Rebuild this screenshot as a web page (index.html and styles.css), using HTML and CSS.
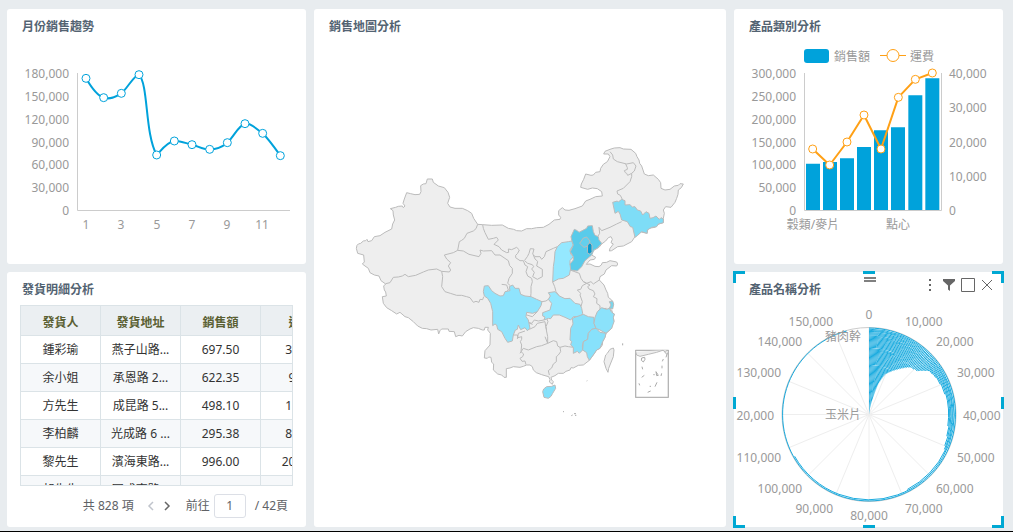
FILE: index.html
```html
<!DOCTYPE html>
<html lang="zh-Hant">
<head>
<meta charset="utf-8">
<meta name="viewport" content="width=device-width, initial-scale=1">
<title>銷售分析</title>
<link rel="stylesheet" href="styles.css">
</head>
<body>
<main class="dashboard">
  <section class="card">
    <header class="card-header"><h2>月份銷售趨勢</h2></header>
    <svg class="chart" viewBox="7 42 299 222" role="img" aria-label="月份銷售趨勢">
      <g class="tick end">
        <text x="69" y="78">180,000</text><text x="69" y="101">150,000</text><text x="69" y="124">120,000</text>
        <text x="69" y="147">90,000</text><text x="69" y="169">60,000</text><text x="69" y="192">30,000</text><text x="69" y="215">0</text>
      </g>
      <g class="tick middle">
        <text x="86" y="229">1</text><text x="121" y="229">3</text><text x="157" y="229">5</text><text x="192" y="229">7</text><text x="227" y="229">9</text><text x="262" y="229">11</text>
      </g>
      <path class="axis" d="M77.5 73V210.500H290"/>
      <g transform="scale(.33333)">
        <path class="trend" d="M258 235C276 266 293 288 311 293C329 300 346 291 364 280C382 266 404 222 417 224C446 255 434 400 470 465C480 455 500 426 523 423C540 422 558 430 576 434C594 438 611 450 629 448C647 448 664 443 682 428C702 410 715 376 735 371C753 368 770 388 788 400C806 418 823 442 841 467"/>
        <g class="dots blue">
          <circle cx="258" cy="235" r="12"/><circle cx="311" cy="293" r="12"/><circle cx="364" cy="280" r="12"/><circle cx="417" cy="224" r="12"/><circle cx="470" cy="465" r="12"/><circle cx="523" cy="423" r="12"/><circle cx="576" cy="434" r="12"/><circle cx="629" cy="448" r="12"/><circle cx="682" cy="428" r="12"/><circle cx="735" cy="371" r="12"/><circle cx="788" cy="400" r="12"/><circle cx="841" cy="467" r="12"/>
        </g>
      </g>
    </svg>
  </section>

  <section class="card map-card">
    <header class="card-header"><h2>銷售地圖分析</h2></header>
    <svg class="chart" viewBox="314 42 412 485" role="img" aria-label="銷售地圖分析">
      <g class="map" transform="translate(345 140) scale(.33333)">
        <path d="M34 325L36 316 40 312 47 310 55 303 62 302 66 298 69 305 80 302 88 290 105 287 120 277 140 267 143 252 149 240 145 225 144 212 136 206 152 202 160 199 172 198 175 203 180 198 174 190 178 177 185 158 197 161 210 164 224 163 228 155 227 137 235 132 243 131 247 117 262 117 265 127 280 138 298 143 309 157 314 172 308 190 315 201 330 205 352 205 368 212 380 220 386 235 398 253 413 254 440 256 472 255 490 265 506 268 515 272 530 273 545 266 560 266 575 263 595 262 612 253 628 240 645 238 647 232 641 225 641 212 652 203 660 210 672 211 690 206 712 198 722 183 735 178 752 170 772 168 770 155 757 146 742 144 728 148 707 142 709 132 716 118 722 102 738 106 745 105 752 97 765 95 767 85 775 73 787 65 795 50 790 42 776 42 780 34 795 28 808 24 825 23 835 27 858 28 872 40 876 50 882 60 884 70 890 78 898 102 910 107 925 105 940 118 947 128 948 145 960 150 975 148 988 138 1000 136 1005 131 1015 132 1009 143 1000 150 999 163 995 175 990 187 978 202 962 200 955 210 958 220 955 235 955 248 942 252 930 262 910 265 905 280 885 275 875 282 870 290 860 305 835 318 818 320 800 332 793 333 795 325 805 312 798 308 802 298 798 290 790 293 782 303 770 312 762 322 750 328 742 335 740 345 752 352 748 358 735 360 724 373 735 372 750 379 762 380 769 375 772 368 785 367 795 362 815 366 818 372 815 378 800 377 783 390 778 402 765 410 763 420 777 435 783 450 788 460 790 472 800 480 805 493 793 505 800 510 803 519 808 522 805 532 807 545 800 550 800 565 783 580 780 592 773 605 772 615 765 625 755 630 747 642 733 661 715 675 700 676 685 684 678 683 675 690 663 694 655 700 640 700 630 707 618 712 620 720 625 725 622 733 613 726 615 719 611 710 600 707 590 704 574 698 565 690 562 680 555 675 545 675 535 679 525 682 505 680 495 684 484 686 484 712 477 712 470 705 458 702 445 690 446 672 440 667 438 652 431 651 427 655 418 654 420 632 435 615 436 580 428 570 430 562 420 562 418 570 412 570 400 565 385 563 375 567 362 575 352 588 342 586 332 590 328 575 312 574 310 567 290 567 285 572 281 582 278 568 258 570 245 566 232 565 218 558 205 545 190 533 180 530 165 517 155 522 140 512 125 503 115 490 112 470 124 468 122 456 118 450 116 438 122 432 108 422 102 408 88 405 75 398 70 385 60 378 52 372 58 366 56 345 38 340Z"/>
        <g class="borders">
          <path d="M122 431L135 428 145 412 160 411 172 408 180 403 190 410 212 406 235 396 250 390 275 387 290 394 313 396 317 390 310 378 317 368 305 357 298 345 325 338 338 331 343 305 350 301 358 295 366 280 385 273 393 266 398 253"/>
          <path d="M338 331L355 333 372 343 402 350 408 340 405 330 415 333 440 332 450 345 465 345 490 362 494 377 502 385 502 400 492 415 488 430 496 437M470 433L485 435 490 450 482 457 476 463"/>
          <path d="M413 254L415 265 420 278 430 298 445 295 455 292 460 300 447 313 462 320 470 330 485 338 491 337 490 327 500 329 515 322 523 330 518 340 512 346 512 353 525 362 535 362 540 375 548 380 543 395 548 408 560 415 562 425 558 440 558 460 557 470"/>
          <path d="M538 362L547 350 552 340 556 326 567 327 563 342 570 350 585 350 590 358 598 350 603 335 625 325 637 320"/>
          <path d="M540 363L548 370 562 374 566 380 560 387 568 397 563 410 577 418 592 410 592 388 575 378 578 364 570 357 565 345"/>
          <path d="M290 394L293 410 290 440 300 455 316 460 335 466 350 466 365 470 375 473 385 487 393 484 402 487 405 478 413 479 416 470"/>
          <path d="M795 35L803 45 805 57 817 65 845 72 865 68 873 78 868 93 860 100 860 110 855 125 835 145 816 153 818 162 826 166 832 178M842 72L847 83 847 88 838 92 841 98 845 100 848 106 860 100"/>
          <path d="M830 245L815 252 795 262 770 272 762 262 764 280 758 290"/>
          <path d="M623 426L629 440 633 455 643 468M675 390L703 400 708 415 715 425 725 430 712 437 707 448 697 450 707 460 705 465 712 485 708 500"/>
          <path d="M715 425L725 430 738 425 745 432 763 420M725 430L735 435 728 440 732 447 745 452 750 462 745 470 756 476 755 490 765 497 765 507 785 505M755 532L765 507"/>
          <path d="M605 535L609 545 603 560 604 570 608 590 608 610 625 602 635 605 638 618 645 622 660 618 670 620 685 622M645 622L647 635 640 645 634 650 634 665 625 672 620 684 610 692 613 705M600 590L608 610"/>
          <path d="M525 640L535 625 550 630 575 620 590 617 608 610M553 568L570 560 577 550 600 545 602 560 605 570"/>
          <path d="M505 585L517 585 519 593 530 590 530 598 526 605 530 615 528 635 536 642 533 650 525 655 531 664 540 663 543 674M517 597L520 580 540 573"/>
          <path d="M591 485L603 483 610 478M577 515L562 530 545 525M545 545L560 550 568 540 580 543 597 540M548 548L563 553"/>
        </g>
        <path fill="#7eddf7" d="M803 187L817 183 820 186 830 178 840 182 840 195 855 194 862 201 870 200 877 210 887 213 893 225 903 215 912 220 915 235 924 233 933 228 943 238 948 233 955 237 955 248 940 252 935 260 920 262 907 270 907 280 890 275 877 287 870 292 863 262 856 260 847 245 830 240 825 222 820 214 810 220Z"/>
        <path fill="#95e8ff" d="M637 320L650 308 670 305 680 303 685 315 675 330 677 342 685 350 675 362 675 372 678 380 673 405 655 415 640 417 623 426 625 380 628 360 630 335Z"/>
        <path fill="#59cbea" d="M680 300L678 290 688 268 697 272 702 277 725 265 728 258 742 257 745 275 750 286 760 290 762 300 770 310 757 325 747 330 740 345 720 362 710 380 697 393 677 390 675 372 685 360 685 350 676 335 685 315Z"/>
        <path fill="#64cfec" d="M704 310L715 294 725 291 735 303 730 318 717 322Z"/>
        <path fill="#0598cd" d="M728 315L735 308 741 315 741 335 735 343 727 338Z"/>
        <path fill="#8fe4fd" d="M418 438L430 437 440 452 450 460 465 468 475 467 480 455 495 452 493 440 503 435 510 445 522 445 527 463 540 468 558 470 575 478 591 485 588 497 577 515 563 520 545 517 543 530 550 540 555 565 547 572 540 563 527 569 520 555 517 568 511 570 505 585 502 603 488 607 480 595 470 575 458 568 455 555 450 552 443 557 443 515 437 490 428 475 418 468 415 455Z"/>
        <path fill="#95e8ff" d="M610 458L630 455 643 468 660 476 675 475 690 490 705 493 710 505 713 520 707 530 685 530 677 540 660 532 643 525 625 525 617 536 610 535 597 540 600 531 593 528 593 518 615 510 620 490 610 478 616 468Z"/>
        <path fill="#87e1fb" d="M682 535L695 530 715 523 730 530 747 532 747 550 753 565 740 568 730 580 728 598 715 605 712 618 713 630 703 640 697 634 685 640 685 622 677 615 680 604 675 600 677 565 684 552Z"/>
        <path fill="#8be2fb" d="M750 532L757 515 770 503 785 508 793 505 800 517 808 522 805 532 807 545 800 565 783 580 765 570 753 565 747 550Z"/>
        <path fill="#87e1fb" d="M740 568L753 565 765 577 783 580 780 592 773 605 765 625 755 630 747 642 733 661 727 650 725 638 713 630 715 605 728 598 730 580Z"/>
        <path fill="#76d6ee" d="M793 485L803 483 806 493 803 507 793 505 798 495Z"/>
        <path fill="#84e1fb" d="M593 755L596 747 605 740 620 739 630 735 632 745 623 760 618 769 610 775 597 772Z"/>
        <path d="M805 624L795 628 787 640 782 645 777 665 783 685 789 697 791 685 795 675 805 650 807 630Z"/>
        <path class="marks" d="M833 610V616M725 723L727 722M654 815H657M679 827L683 825M687 821H693M690 826H694"/>
        <rect class="inset" x="872" y="631" width="98" height="141"/>
        <path class="inset-land" d="M872 635L875 645 885 649 910 643 935 637 953 631M955 631L965 643 969 637M955 631L961 637 965 631"/>
        <path class="marks" d="M890 654L899 652 900 658 895 666 889 661ZM967 640L963 652M955 657L952 664M891 680L893 688M951 677V685M890 712L898 706M925 704H929M933 695L938 703 940 706 935 707ZM950 700L948 708M882 730L884 736M936 727L930 740M914 739H918M908 757L917 753"/>
      </g>
    </svg>
  </section>

  <section class="card">
    <header class="card-header"><h2>產品類別分析</h2></header>
    <svg class="chart" viewBox="734 42 269 222" role="img" aria-label="產品類別分析">
      <rect class="bar" x="804" y="49" width="25" height="14" rx="3"/>
      <path class="legend-line" d="M880 55.500H906"/><circle class="legend-dot" cx="893" cy="55.500" r="6"/>
      <g class="tick"><text x="834" y="61">銷售額</text><text x="910" y="61">運費</text>
        <text x="949" y="78">40,000</text><text x="949" y="112">30,000</text><text x="949" y="147">20,000</text><text x="949" y="181">10,000</text><text x="949" y="215">0</text></g>
      <g class="tick end">
        <text x="796" y="78">300,000</text><text x="796" y="101">250,000</text><text x="796" y="124">200,000</text><text x="796" y="147">150,000</text><text x="796" y="169">100,000</text><text x="796" y="192">50,000</text><text x="796" y="215">0</text>
      </g>
      <g class="tick middle"><text x="813" y="229">穀類/麥片</text><text x="898" y="229">點心</text></g>
      <path class="axis" d="M804.500 73V210.500H941.500V73"/>
      <g transform="translate(727 0) scale(.33333)">
        <path class="bar" d="M237 630V491H279V630ZM288 630V486H330V630ZM339 630V475H381V630ZM390 630V441H432V630ZM441 630V391H483V630ZM492 630V382H534V630ZM544 630V286H586V630ZM595 630V235H637V630Z"/>
        <path class="freight" d="M257 447L308 495 360 426 411 345 462 447 514 292 565 238 616 219"/>
        <g class="dots orange">
          <circle cx="257" cy="447" r="12"/><circle cx="308" cy="495" r="12"/><circle cx="360" cy="426" r="12"/><circle cx="411" cy="345" r="12"/><circle cx="462" cy="447" r="12"/><circle cx="514" cy="292" r="12"/><circle cx="565" cy="238" r="12"/><circle cx="616" cy="219" r="12"/>
        </g>
      </g>
    </svg>
  </section>

  <section class="card">
    <header class="card-header"><h2>發貨明細分析</h2></header>
    <div class="table-wrap">
      <table>
        <thead><tr><th>發貨人</th><th>發貨地址</th><th>銷售額</th><th>運費</th></tr></thead>
        <tbody>
          <tr><td>鍾彩瑜</td><td>燕子山路...</td><td>697.50</td><td>32.38</td></tr>
          <tr><td>余小姐</td><td>承恩路 2...</td><td>622.35</td><td>9.75</td></tr>
          <tr><td>方先生</td><td>成昆路 5...</td><td>498.10</td><td>11.61</td></tr>
          <tr><td>李柏麟</td><td>光成路 6 ...</td><td>295.38</td><td>81.91</td></tr>
          <tr><td>黎先生</td><td>濱海東路...</td><td>996.00</td><td>208.58</td></tr>
          <tr><td>胡先生</td><td>冠成南路...</td><td>325.00</td><td>65.83</td></tr>
        </tbody>
      </table>
    </div>
    <nav class="pager" aria-label="分頁">
      <span>共 828 項</span>
      <div class="arrows">
        <button type="button" aria-label="上一頁" disabled><svg viewBox="0 0 8 12"><path d="M6 2L2 6L6 10"/></svg></button>
        <button type="button" aria-label="下一頁"><svg viewBox="0 0 8 12"><path d="M2 2L6 6L2 10"/></svg></button>
      </div>
      <label for="page">前往</label>
      <input id="page" type="text" value="1">
      <span class="total">/ 42頁</span>
    </nav>
  </section>

  <section class="card selected">
    <header class="card-header">
      <h2>產品名稱分析</h2>
      <div class="tools">
        <button type="button" aria-label="更多"><svg viewBox="0 0 14 14"><path class="solid" d="M6 1h2v2H6zM6 6h2v2H6zM6 11h2v2H6z"/></svg></button>
        <button type="button" aria-label="篩選"><svg viewBox="0 0 14 14"><path class="solid" d="M1 1H13V3L8 7.500V13L6 11.500V7.500L1 3Z"/></svg></button>
        <button type="button" aria-label="最大化"><svg viewBox="0 0 14 14"><path d="M.5.5H13.500V13.500H.5Z"/></svg></button>
        <button type="button" aria-label="關閉"><svg viewBox="0 0 14 14"><path d="M2 2L12 12M12 2L2 12"/></svg></button>
      </div>
    </header>
    <svg class="chart clipped" viewBox="735 305 267 222" role="img" aria-label="產品名稱分析">
      <g id="spokes" class="spokes"></g>
      <circle class="ring" cx="869" cy="414.500" r="87"/>
      <g id="rings" class="rings"></g>
      <g class="tick">
        <text x="905" y="326">10,000</text><text x="936" y="346">20,000</text><text x="957" y="377">30,000</text><text x="963" y="420">40,000</text><text x="957" y="462">50,000</text><text x="936" y="493">60,000</text><text x="905" y="513">70,000</text>
      </g>
      <g class="tick middle"><text x="869" y="319">0</text><text x="869" y="520">80,000</text></g>
      <g class="tick end">
        <text x="833" y="513">90,000</text><text x="802" y="493">100,000</text><text x="781" y="462">110,000</text><text x="774" y="420">120,000</text><text x="781" y="377">130,000</text><text x="802" y="346">140,000</text><text x="833" y="326">150,000</text>
        <text x="861" y="341">豬肉幹</text><text x="861" y="419">玉米片</text>
      </g>
    </svg>
    <span class="grip" aria-hidden="true"></span>
    <span class="handle top left"></span><span class="handle top mid"></span><span class="handle top right"></span>
    <span class="handle side left"></span><span class="handle side right"></span>
    <span class="handle bottom left"></span><span class="handle bottom mid"></span><span class="handle bottom right"></span>
  </section>
</main>
<script src="chart.js"></script>
</body>
</html>
```

FILE: styles.css
```css
* { box-sizing: border-box; }

body {
  margin: 0;
  background: #e8ecef;
  color: #606266;
  font: 12px/18px "Noto Sans", "Noto Sans CJK TC", sans-serif;
}

.dashboard {
  display: grid;
  grid-template-columns: 299fr 412fr 269fr;
  grid-template-rows: repeat(2, minmax(0, 1fr));
  gap: 8px;
  height: 100vh;
  padding: 9px 10px 4px 7px;
  border-bottom: 1px solid #000;
}

.card {
  display: flex;
  flex-direction: column;
  min-width: 0;
  min-height: 0;
  background: #fff;
  border-radius: 3px;
}

.map-card { grid-row: span 2; }

.card-header {
  display: flex;
  flex: none;
  align-items: center;
  justify-content: space-between;
  height: 33px;
  padding: 2px 9px 0 15px;
}

.card-header h2 {
  margin: 0;
  color: #536372;
  font-size: 12px;
  font-weight: 700;
}

.chart {
  display: block;
  flex: 1 1 0;
  width: 100%;
  min-height: 0;
}

.clipped { padding: 0 1px; }

.tick { fill: #999; font-size: 12px; }
.end { text-anchor: end; }
.middle { text-anchor: middle; }
.axis { fill: none; stroke: #ccc; }
.trend { fill: none; stroke: #00a2db; stroke-width: 6; }
.freight { fill: none; stroke: #ffa015; stroke-width: 6; stroke-linejoin: round; }
.dots { fill: #fff; stroke-width: 3; }
.blue { stroke: #00a2db; }
.orange { stroke: #ffa015; }
.bar { fill: #00a2db; }
.legend-line { stroke: #ffa015; }
.legend-dot { fill: #fff; stroke: #ffa015; }

.map { fill: #eee; stroke: #bbb; stroke-width: 3; stroke-linejoin: round; }
.borders, .marks { fill: none; }
.marks { stroke: #aaa; }
.inset { fill: none; stroke: #b5b5b5; stroke-width: 4; }
.inset-land { stroke: #bbb; }

.ring { fill: none; stroke: #ccc; }
.spokes { stroke: #eee; }
.rings { fill: none; stroke: #00a2db; stroke-width: 0.9; }

.table-wrap {
  flex: 1 1 0;
  min-height: 0;
  margin: 0 13px;
  overflow: hidden;
  border: 1px solid #dbe3e7;
}

table {
  width: 320px;
  table-layout: fixed;
  border-collapse: separate;
  border-spacing: 0;
  color: #333;
}

th, td {
  height: 28px;
  padding: 0;
  border-right: 1px solid #dbe3e7;
  border-bottom: 1px solid #dbe3e7;
  text-align: center;
  white-space: nowrap;
}

th {
  height: 30px;
  padding-top: 4px;
  background: #ebeff2;
  color: #5a6032;
  font-weight: 700;
}

tbody tr:nth-child(even) { background: #f6f8fa; }

.pager {
  display: flex;
  flex: none;
  align-items: center;
  justify-content: flex-end;
  height: 41px;
  padding: 0 18px 2px 0;
}

.arrows {
  display: flex;
  gap: 8px;
  margin: 0 15px 0 13px;
}

button {
  display: block;
  padding: 0;
  border: 0;
  background: none;
  color: #666;
}

button svg {
  display: block;
  width: 14px;
  height: 14px;
  fill: none;
  stroke: currentColor;
}

.arrows svg { width: 8px; height: 12px; stroke-width: 1.5; }
.arrows button:disabled { color: #c0c4cc; }

.pager input {
  width: 32px;
  height: 24px;
  margin: 0 9px 0 4px;
  padding: 0;
  border: 1px solid #dcdfe6;
  border-radius: 3px;
  background: #fff;
  color: #606266;
  font: inherit;
  text-align: center;
}

.tools { display: flex; gap: 5px; margin-top: -10px; }
.solid { fill: #666; stroke: none; }

.selected { position: relative; }

.grip {
  position: absolute;
  top: 5px;
  left: 50%;
  width: 12px;
  height: 5px;
  margin-left: -5px;
  border: solid #808080;
  border-width: 2px 0;
}

.handle {
  position: absolute;
  width: 12px;
  height: 12px;
  border: 0 solid #00a8d3;
}

.top { top: -1px; border-top-width: 3px; }
.bottom { bottom: -1px; border-bottom-width: 3px; }
.left { left: -1px; border-left-width: 3px; }
.right { right: -1px; border-right-width: 3px; }
.mid { left: 50%; margin-left: -6px; }
.side { top: 50%; margin-top: -3px; }
```

FILE: chart.js
```js
const NS = "http://www.w3.org/2000/svg";
const cx = 869, cy = 414.5, radius = 87, count = 77;

// [radius share, sweep in degrees] pairs, interpolated for each product
const sweep = [
  [0, 6], [0.18, 13], [0.37, 17], [0.5, 22], [0.61, 32], [0.72, 41],
  [0.745, 48], [0.85, 54], [0.88, 62], [0.895, 70], [0.91, 80],
  [0.915, 98], [0.94, 112], [0.96, 116], [0.97, 165], [0.98, 235], [0.99, 345], [1, 345]
];

function angleAt(share) {
  for (let i = 1; i < sweep.length; i++) {
    const [r0, a0] = sweep[i - 1], [r1, a1] = sweep[i];
    if (share <= r1) return a0 + (a1 - a0) * (share - r0) / (r1 - r0);
  }
  return 345;
}

function point(r, deg) {
  const a = deg * Math.PI / 180;
  return (cx + r * Math.sin(a)).toFixed(2) + " " + (cy - r * Math.cos(a)).toFixed(2);
}

function addPath(parent, d) {
  const path = document.createElementNS(NS, "path");
  path.setAttribute("d", d);
  parent.appendChild(path);
}

const spokes = document.getElementById("spokes");
for (let i = 0; i < 16; i++) {
  addPath(spokes, `M${cx} ${cy}L${point(radius, i * 22.5)}`);
}

const rings = document.getElementById("rings");
for (let i = 0; i < count; i++) {
  const share = (i + 0.5) / count;
  const r = share * radius;
  const deg = angleAt(share);
  addPath(rings, `M${point(r, 0)}A${r} ${r} 0 ${deg > 180 ? 1 : 0} 1 ${point(r, deg)}`);
}
```
